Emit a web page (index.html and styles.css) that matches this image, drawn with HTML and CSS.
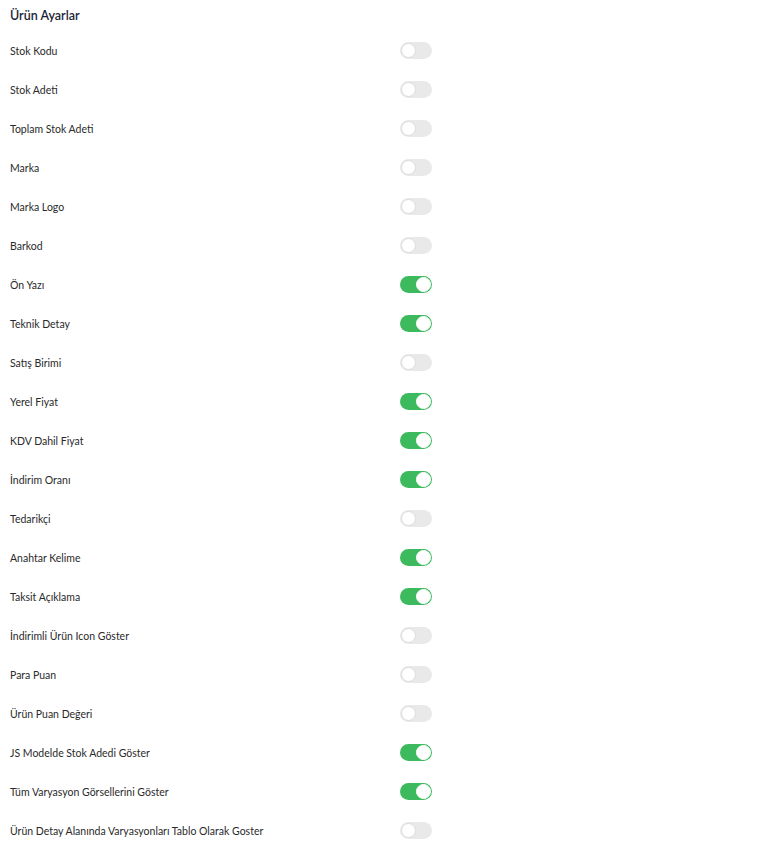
FILE: index.html
```html
<!DOCTYPE html>
<html lang="tr">
<head>
<meta charset="utf-8">
<title>Ürün Ayarlar</title>
<link rel="stylesheet" href="styles.css">
</head>
<body>
<div class="panel">
  <h2 class="title">Ürün Ayarlar</h2>
  <div class="row"><span class="label">Stok Kodu</span><span class="toggle"></span></div>
  <div class="row"><span class="label">Stok Adeti</span><span class="toggle"></span></div>
  <div class="row"><span class="label">Toplam Stok Adeti</span><span class="toggle"></span></div>
  <div class="row"><span class="label">Marka</span><span class="toggle"></span></div>
  <div class="row"><span class="label">Marka Logo</span><span class="toggle"></span></div>
  <div class="row"><span class="label">Barkod</span><span class="toggle"></span></div>
  <div class="row"><span class="label">Ön Yazı</span><span class="toggle on"></span></div>
  <div class="row"><span class="label">Teknik Detay</span><span class="toggle on"></span></div>
  <div class="row"><span class="label">Satış Birimi</span><span class="toggle"></span></div>
  <div class="row"><span class="label">Yerel Fiyat</span><span class="toggle on"></span></div>
  <div class="row"><span class="label">KDV Dahil Fiyat</span><span class="toggle on"></span></div>
  <div class="row"><span class="label">İndirim Oranı</span><span class="toggle on"></span></div>
  <div class="row"><span class="label">Tedarikçi</span><span class="toggle"></span></div>
  <div class="row"><span class="label">Anahtar Kelime</span><span class="toggle on"></span></div>
  <div class="row"><span class="label">Taksit Açıklama</span><span class="toggle on"></span></div>
  <div class="row"><span class="label">İndirimli Ürün Icon Göster</span><span class="toggle"></span></div>
  <div class="row"><span class="label">Para Puan</span><span class="toggle"></span></div>
  <div class="row"><span class="label">Ürün Puan Değeri</span><span class="toggle"></span></div>
  <div class="row"><span class="label">JS Modelde Stok Adedi Göster</span><span class="toggle on"></span></div>
  <div class="row"><span class="label">Tüm Varyasyon Görsellerini Göster</span><span class="toggle on"></span></div>
  <div class="row"><span class="label">Ürün Detay Alanında Varyasyonları Tablo Olarak Goster</span><span class="toggle"></span></div>
</div>
</body>
</html>
```
FILE: styles.css
```css
html, body {
  margin: 0;
  padding: 0;
  background: #ffffff;
}
body {
  font-family: "Lato", "Noto Sans", sans-serif;
  color: #262626;
}
.panel {
  padding: 0 10px;
}
.title {
  margin: 0;
  padding-top: 1px;
  height: 30px;
  line-height: 30px;
  font-size: 12.5px;
  font-weight: 600;
  color: #1b2437;
}
.row {
  display: flex;
  align-items: center;
  height: 39px;
}
.label {
  width: 390px;
  font-size: 10.5px;
  color: #2a2a2a;
}
.toggle {
  position: relative;
  box-sizing: border-box;
  width: 32px;
  height: 17px;
  border-radius: 9px;
  background: #e9e9e9;
  flex-shrink: 0;
}
.toggle::after {
  content: "";
  position: absolute;
  left: 1px;
  top: 1px;
  width: 15px;
  height: 15px;
  box-sizing: border-box;
  border-radius: 50%;
  background: #ffffff;
  border: 1px solid #dcdcdc;
}
.toggle.on {
  background: #3dba5d;
}
.toggle.on::after {
  left: 16px;
  border-color: #ffffff;
}
```
